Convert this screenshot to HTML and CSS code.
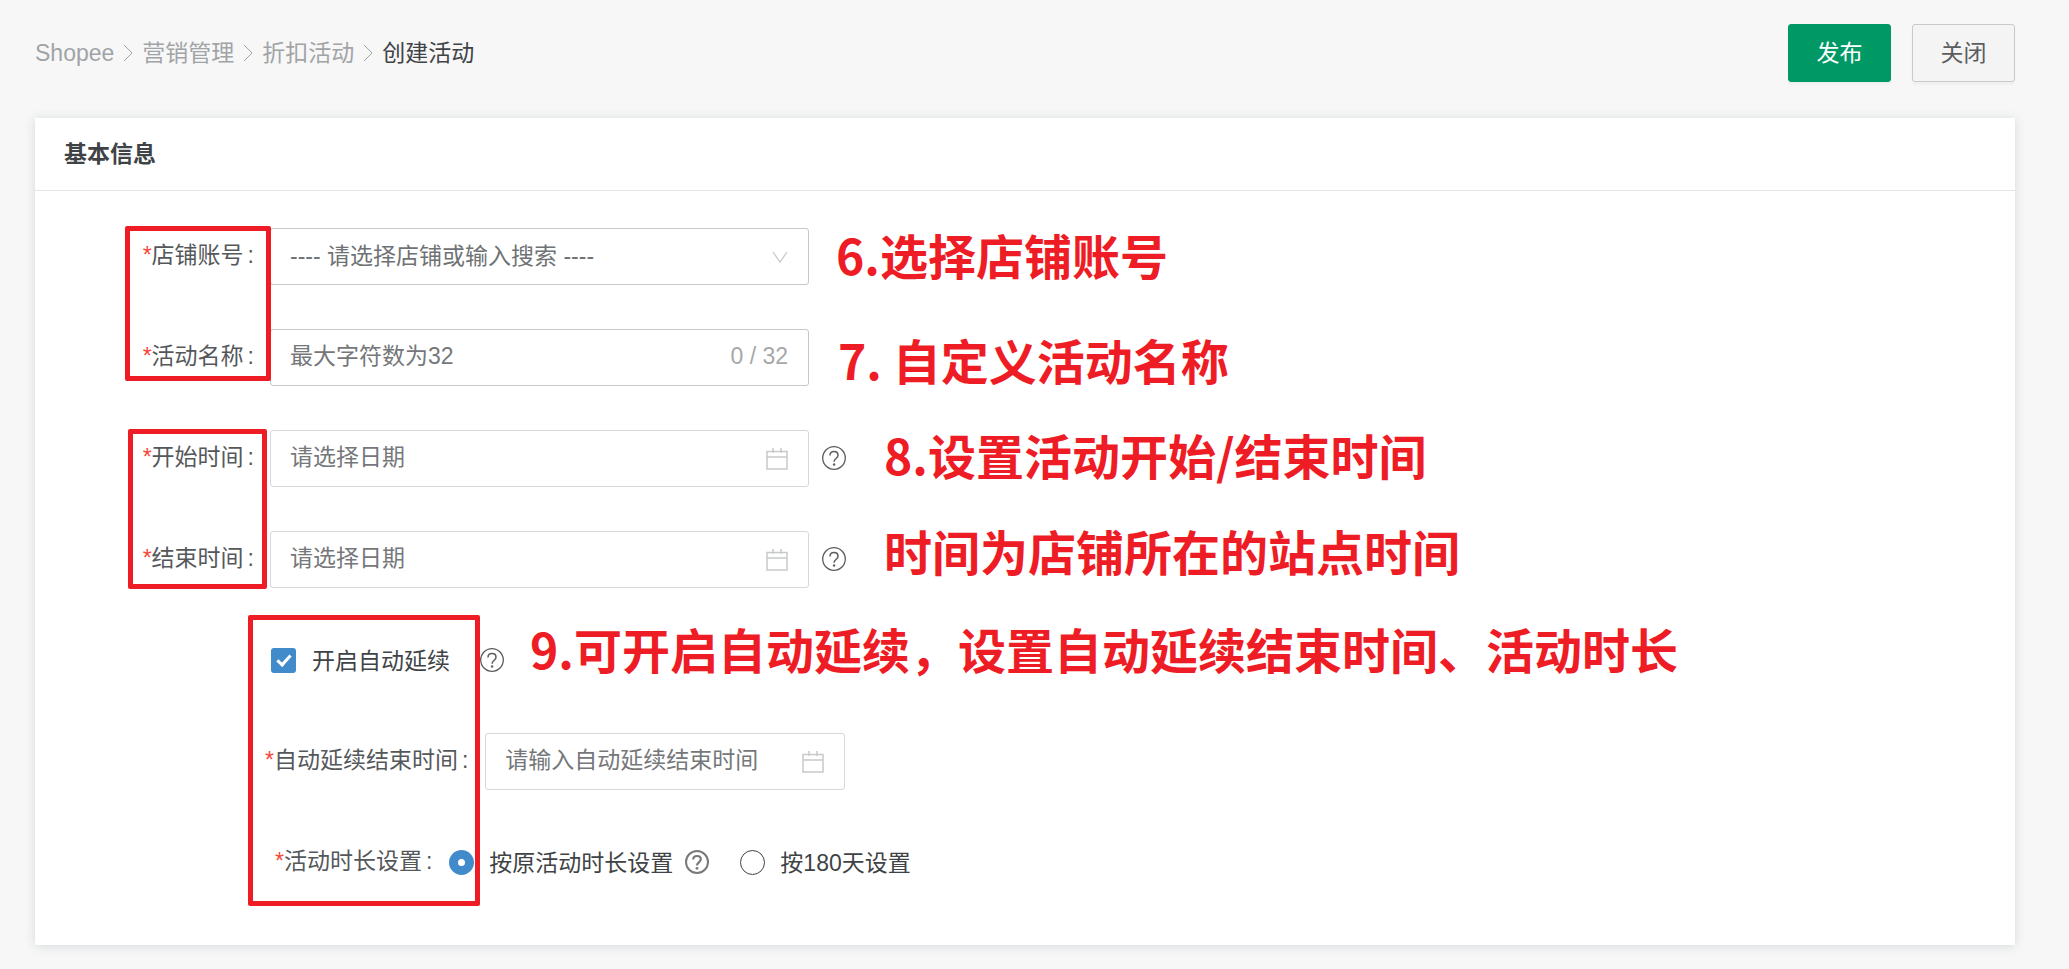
FILE: index.html
```html
<!DOCTYPE html>
<html lang="zh-CN">
<head>
  <meta charset="UTF-8">
  <title>创建活动</title>
  <link rel="stylesheet" href="styles.css">
</head>
<body>

  <!-- 图标 -->
  <svg class="sprite" aria-hidden="true">
    <symbol id="i-right" viewBox="0 0 10 18">
      <path d="M1 1l8 8-8 8" fill="none" stroke="currentColor"/>
    </symbol>
    <symbol id="i-down" viewBox="0 0 16 12">
      <path d="M1 1l7 10 7-10" fill="none" stroke="currentColor" stroke-width="1.3"/>
    </symbol>
    <symbol id="i-date" viewBox="0 0 22 22">
      <path d="M1 3.5h20V21H1zM1 9h20M7 0v5M15 0v5" fill="none" stroke="currentColor" stroke-width="1.5"/>
    </symbol>
    <symbol id="i-help" viewBox="0 0 24 24">
      <circle cx="12" cy="12" r="11.3" fill="none" stroke="currentColor" stroke-width="1.3"/>
      <path d="M8 9.4C8 7 9.7 5.5 12 5.5s4 1.5 4 3.7c0 1.5-.8 2.3-2 3.3-1.2 1-1.9 1.6-1.9 3.3" fill="none" stroke="currentColor" stroke-width="1.5"/>
      <circle cx="12.1" cy="18.5" r="1.2" fill="currentColor"/>
    </symbol>
    <symbol id="i-help-bold" viewBox="0 0 24 24">
      <circle cx="12" cy="12" r="11" fill="none" stroke="currentColor" stroke-width="2"/>
      <path d="M8.2 9.6C8.2 7.3 9.8 6 12 6s3.8 1.3 3.8 3.3c0 1.5-.8 2.2-1.9 3.1-1.2 1-1.9 1.5-1.9 3.1" fill="none" stroke="currentColor" stroke-width="2.2"/>
      <circle cx="12" cy="18.3" r="1.4" fill="currentColor"/>
    </symbol>
  </svg>

  <header class="topbar">
    <nav class="crumbs">
      <a href="#">Shopee</a>
      <svg class="crumb-sep"><use href="#i-right"/></svg>
      <a href="#">营销管理</a>
      <svg class="crumb-sep"><use href="#i-right"/></svg>
      <a href="#">折扣活动</a>
      <svg class="crumb-sep"><use href="#i-right"/></svg>
      <span class="current">创建活动</span>
    </nav>
    <div class="actions">
      <button type="button" class="btn btn-primary">发布</button>
      <button type="button" class="btn">关闭</button>
    </div>
  </header>

  <main class="card">
    <h2 class="card-title">基本信息</h2>

    <form class="form">
      <div class="row">
        <label class="label" for="shop"><i>*</i>店铺账号<b>:</b></label>
        <div class="field">
          <select id="shop" class="control">
            <option>---- 请选择店铺或输入搜索 ----</option>
          </select>
          <svg class="field-icon arrow"><use href="#i-down"/></svg>
        </div>
      </div>

      <div class="row">
        <label class="label" for="name"><i>*</i>活动名称<b>:</b></label>
        <div class="field">
          <input id="name" class="control" type="text" maxlength="32" placeholder="最大字符数为32">
          <span class="count">0 / 32</span>
        </div>
      </div>

      <div class="row">
        <label class="label" for="start"><i>*</i>开始时间<b>:</b></label>
        <div class="field">
          <input id="start" class="control light" type="text" placeholder="请选择日期">
          <svg class="field-icon date"><use href="#i-date"/></svg>
        </div>
        <svg class="help"><use href="#i-help"/></svg>
      </div>

      <div class="row">
        <label class="label" for="end"><i>*</i>结束时间<b>:</b></label>
        <div class="field">
          <input id="end" class="control light" type="text" placeholder="请选择日期">
          <svg class="field-icon date"><use href="#i-date"/></svg>
        </div>
        <svg class="help"><use href="#i-help"/></svg>
      </div>

      <div class="row row-check">
        <label class="option"><input type="checkbox" class="check" checked>开启自动延续</label>
        <svg class="help"><use href="#i-help"/></svg>
      </div>

      <div class="row row-extend">
        <label class="label" for="extend"><i>*</i>自动延续结束时间<b>:</b></label>
        <div class="field narrow">
          <input id="extend" class="control light" type="text" placeholder="请输入自动延续结束时间">
          <svg class="field-icon date"><use href="#i-date"/></svg>
        </div>
      </div>

      <div class="row row-duration" role="radiogroup" aria-labelledby="duration">
        <span class="label" id="duration"><i>*</i>活动时长设置<b>:</b></span>
        <label class="option"><input type="radio" class="radio" name="duration" checked>按原活动时长设置</label>
        <svg class="help bold"><use href="#i-help-bold"/></svg>
        <label class="option"><input type="radio" class="radio" name="duration">按180天设置</label>
      </div>
    </form>

    <!-- 操作说明标注 -->
    <div class="mark mark-basic"></div>
    <div class="mark mark-time"></div>
    <div class="mark mark-extend"></div>
    <p class="note note-shop">6.选择店铺账号</p>
    <p class="note note-name">7. 自定义活动名称</p>
    <p class="note note-time">8.设置活动开始/结束时间</p>
    <p class="note note-zone">时间为店铺所在的站点时间</p>
    <p class="note note-extend">9.可开启自动延续，设置自动延续结束时间、活动时长</p>
  </main>

</body>
</html>
```
FILE: styles.css
```css
* { box-sizing: border-box; }

body {
  margin: 0;
  padding: 24px 54px 24px 35px;
  background: #f7f7f7;
  color: #404346;
  font-family: "Liberation Sans", "Noto Sans CJK SC", sans-serif;
  font-size: 23px;
  line-height: 34px;
}

input, select, button {
  font: inherit;
  color: inherit;
}

.sprite {
  display: none;
}

/* 顶部 */
.topbar {
  display: flex;
  justify-content: space-between;
  align-items: center;
  margin-bottom: 36px;
}

.crumbs {
  display: flex;
  align-items: center;
  gap: 9px;
  color: #a1a4a6;
}

.crumbs a {
  color: inherit;
  text-decoration: none;
}

.crumbs .current {
  color: #404346;
}

.crumb-sep {
  width: 10px;
  height: 18px;
}

.actions {
  display: flex;
  gap: 21px;
}

.btn {
  width: 103px;
  height: 58px;
  padding: 0;
  border: 1px solid #c9cacb;
  border-radius: 3px;
  background: #f4f4f4;
  color: #5b5d5f;
  box-shadow: 0 3px 2px rgba(0, 0, 0, 0.03);
  cursor: pointer;
}

.btn-primary {
  border-color: #009966;
  background: #009966;
  color: #fff;
}

/* 卡片 */
.card {
  position: relative;
  background: #fff;
  box-shadow: 0 1px 10px rgba(50, 70, 85, 0.17);
}

.card-title {
  margin: 0;
  padding: 19px 29px;
  border-bottom: 1px solid #e4e5e6;
  font-size: 23px;
  line-height: 34px;
}

.form {
  padding: 15px 0 32px;
}

.row {
  display: flex;
  align-items: center;
  height: 101px;
}

.label {
  width: 235px;
  padding: 0 16px 3px 0;
  text-align: right;
  white-space: nowrap;
  color: #55585b;
}

.label i {
  color: #f5483b;
  font-style: normal;
}

.label b {
  margin-left: 4px;
  font-weight: normal;
}

.field {
  position: relative;
  width: 539px;
}

.field.narrow {
  width: 360px;
}

.control {
  display: block;
  width: 100%;
  height: 57px;
  padding: 0 19px 2px;
  border: 1px solid #c6c7c8;
  border-radius: 3px;
  background: #fff;
  color: #6f7274;
  outline: none;
  appearance: none;
}

.control.light {
  border-color: #d6d7d8;
}

.control::placeholder {
  color: #75777a;
  opacity: 1;
}

.field-icon {
  position: absolute;
  top: 50%;
  right: 21px;
  transform: translateY(-50%);
  color: #c8c9ca;
  pointer-events: none;
}

.field-icon.arrow {
  width: 16px;
  height: 12px;
}

.field-icon.date {
  width: 22px;
  height: 22px;
}

.count {
  position: absolute;
  top: 10px;
  right: 21px;
  color: #a6a8aa;
}

.help {
  width: 24px;
  height: 24px;
  margin: 0 0 2px 13px;
  color: #5b5d5f;
}

.help.bold {
  margin: 0 31px 2px 12px;
  color: #77797b;
}

.option {
  display: flex;
  align-items: center;
  gap: 15px;
}

.row-check {
  padding-left: 236px;
}

.row-check .help {
  margin-left: 30px;
}

.row-extend {
  padding-left: 230px;
}

.row-duration {
  padding-left: 240px;
}

.row-extend .label,
.row-duration .label {
  width: auto;
  padding-right: 17px;
}

.check,
.radio {
  width: 25px;
  height: 25px;
  margin: 0;
  appearance: none;
}

.check {
  border-radius: 3px;
  background: #428bca;
}

.row-check .option {
  gap: 16px;
}

.check::after {
  content: '';
  display: block;
  box-sizing: border-box;
  width: 8px;
  height: 14px;
  margin: 4px 0 0 9px;
  border: solid #fff;
  border-width: 0 3px 3px 0;
  transform: rotate(42deg);
}

.radio {
  border: 1px solid #404346;
  border-radius: 50%;
  background: #fff;
}

.radio:checked {
  border: 9px solid #428bca;
}

/* 标注 */
.mark {
  position: absolute;
  border: 5px solid #ee1c25;
  border-radius: 2px;
}

.mark-basic {
  top: 108px;
  left: 90px;
  width: 146px;
  height: 155px;
}

.mark-time {
  top: 311px;
  left: 93px;
  width: 139px;
  height: 160px;
}

.mark-extend {
  top: 497px;
  left: 213px;
  width: 232px;
  height: 291px;
}

.note {
  position: absolute;
  margin: 0;
  color: #ee1c25;
  font-family: "Noto Sans CJK SC", sans-serif;
  font-size: 48px;
  font-weight: 700;
  line-height: 70px;
  white-space: nowrap;
}

.note-shop {
  top: 101px;
  left: 801px;
}

.note-name {
  top: 206px;
  left: 803px;
}

.note-time {
  top: 301px;
  left: 849px;
}

.note-zone {
  top: 397px;
  left: 849px;
}

.note-extend {
  top: 495px;
  left: 495px;
}
```
